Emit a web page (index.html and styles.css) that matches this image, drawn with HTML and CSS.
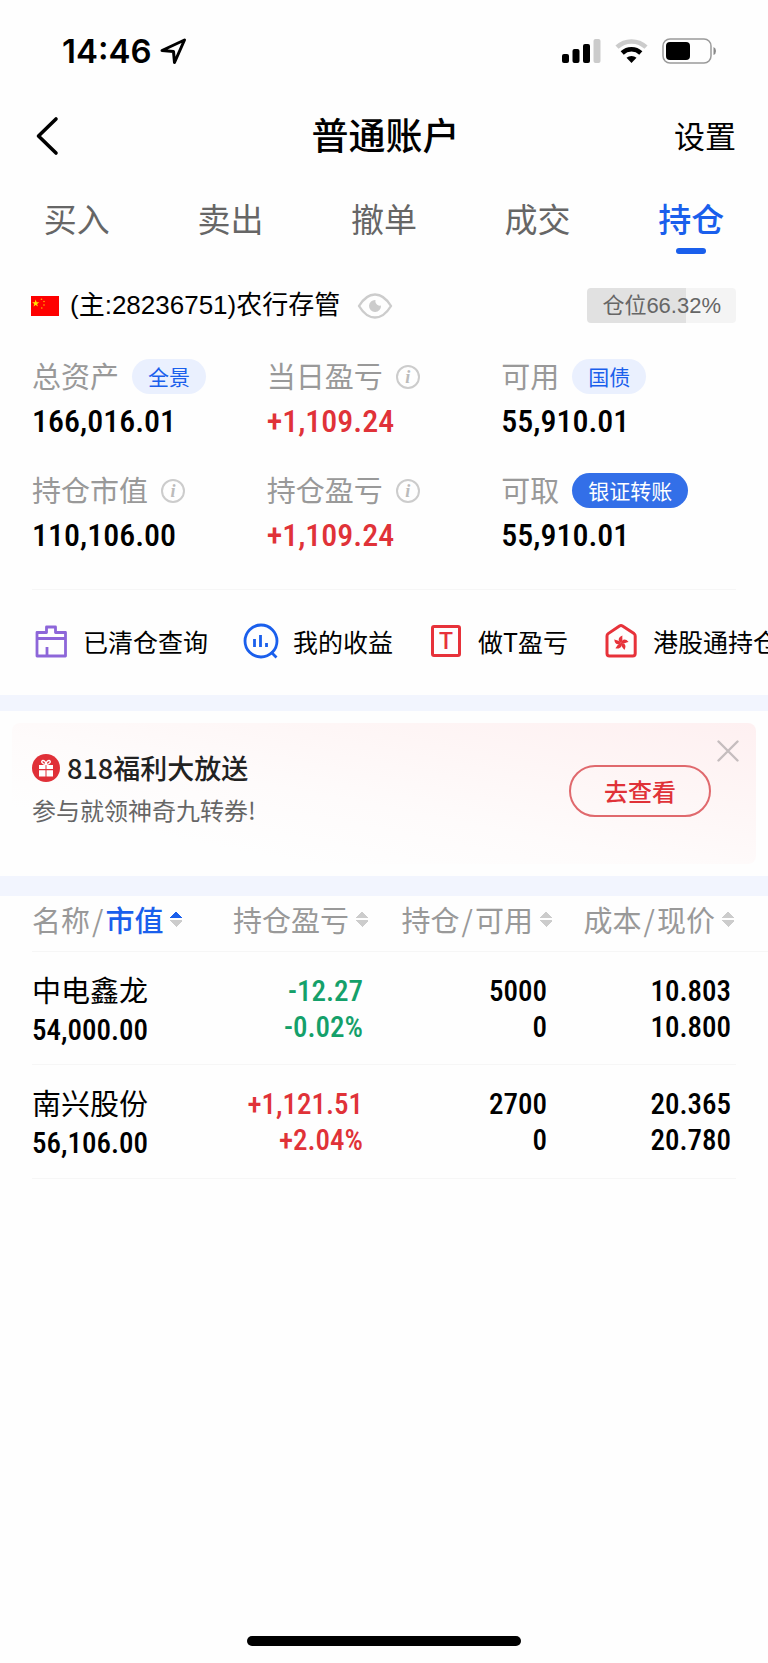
FILE: index.html
```html
<!doctype html>
<html lang="zh-CN">
	<head>
		<meta charset="utf-8" />
		<meta name="viewport" content="width=device-width,initial-scale=1" />
		<title>普通账户</title>
		<link rel="stylesheet" href="styles.css">
	</head>
	<body>
		<div class="status">
			<span class="status-time">14:46</span>
			<svg class="status-location" width="28" height="28" viewBox="0 0 28 28" aria-hidden="true">
				<path d="M3 13.500 L25.500 3 L15.500 25.500 L14.500 14.500 Z" fill="none" stroke="#000" stroke-width="3" stroke-linejoin="round" />
			</svg>
			<svg class="status-signal" width="39" height="26" viewBox="0 0 39 26" aria-hidden="true">
				<rect x="0" y="16" width="7" height="9" rx="2" />
				<rect x="10.500" y="11" width="7" height="14" rx="2" />
				<rect x="21" y="6" width="7" height="19" rx="2" />
				<rect x="31.500" y="1" width="7" height="24" rx="2" fill="#cbcbcb" />
			</svg>
			<svg class="status-wifi" width="33" height="26" viewBox="0 0 33 26" aria-hidden="true">
				<path d="M2 9.200 A21 21 0 0 1 31 9.200" fill="none" stroke="#cbcbcb" stroke-width="4.500" />
				<path d="M7.200 15 A13.500 13.500 0 0 1 25.800 15" fill="none" stroke="#000" stroke-width="4.500" />
				<path d="M11.500 19.800 A7.500 7.500 0 0 1 21.500 19.800 L16.500 25 Z" />
			</svg>
			<svg class="status-battery" width="55" height="26" viewBox="0 0 55 26" aria-hidden="true">
				<rect x="1" y="1" width="48" height="24" rx="7" fill="none" stroke="#9a9a9a" stroke-width="1.500" />
				<rect x="4" y="4" width="24" height="18" rx="4" />
				<path d="M51.500 9 Q54 10 54 13 Q54 16 51.500 17 Z" fill="#8a8a8a" />
			</svg>
		</div>

		<header class="nav">
			<button type="button" class="nav-back" aria-label="返回">
				<svg width="24" height="40" viewBox="0 0 24 40" aria-hidden="true">
					<path d="M21 3 L3.500 20 L21 37" fill="none" stroke="#000" stroke-width="3.600" stroke-linecap="round" stroke-linejoin="round" />
				</svg>
			</button>
			<h1 class="nav-title">普通账户</h1>
			<a class="nav-settings" href="#settings">设置</a>
		</header>

		<nav class="tabs">
			<a class="tab" href="#buy">买入</a>
			<a class="tab" href="#sell">卖出</a>
			<a class="tab" href="#cancel">撤单</a>
			<a class="tab" href="#deals">成交</a>
			<a class="tab tab-active" href="#positions" aria-current="page">持仓</a>
		</nav>

		<section class="account">
			<svg class="flag" width="28" height="20" viewBox="0 0 28 20" aria-hidden="true">
				<rect width="28" height="20" fill="#fe0000" />
				<path d="M4.700 3.600 L5.600 6.300 L8.300 6.300 L6.100 8 L6.900 10.600 L4.700 9 L2.500 10.600 L3.300 8 L1.100 6.300 L3.800 6.300 Z" fill="#ffe600" />
				<g fill="#ffb400">
					<circle cx="10.500" cy="3.200" r=".8" />
					<circle cx="13" cy="5.500" r=".8" />
					<circle cx="13" cy="9" r=".8" />
					<circle cx="10.800" cy="12" r=".8" />
				</g>
			</svg>
			<span class="account-name">(主:28236751)农行存管</span>
			<button type="button" class="eye" aria-label="显示金额">
				<svg width="36" height="26" viewBox="0 0 36 26" aria-hidden="true">
					<path d="M2 13 Q9 1.500 18 1.500 Q27 1.500 34 13 Q27 24.500 18 24.500 Q9 24.500 2 13 Z" fill="none" stroke="#ccc" stroke-width="2.400" stroke-linejoin="round" />
					<path d="M18.500 7 A6 6 0 1 0 24 12.500 A4.500 4.500 0 0 1 18.500 7 Z" fill="#ccc" />
				</svg>
			</button>
			<span class="ratio" style="--ratio: 66.32%">仓位66.32%</span>
		</section>

		<section class="summary">
			<div>
				<div class="summary-label"><span>总资产</span><a class="pill" href="#overview">全景</a></div>
				<div class="summary-value">166,016.01</div>
			</div>
			<div>
				<div class="summary-label"><span>当日盈亏</span><button type="button" class="info" aria-label="当日盈亏说明">i</button></div>
				<div class="summary-value up">+1,109.24</div>
			</div>
			<div>
				<div class="summary-label"><span>可用</span><a class="pill" href="#bonds">国债</a></div>
				<div class="summary-value">55,910.01</div>
			</div>
			<div>
				<div class="summary-label"><span>持仓市值</span><button type="button" class="info" aria-label="持仓市值说明">i</button></div>
				<div class="summary-value">110,106.00</div>
			</div>
			<div>
				<div class="summary-label"><span>持仓盈亏</span><button type="button" class="info" aria-label="持仓盈亏说明">i</button></div>
				<div class="summary-value up">+1,109.24</div>
			</div>
			<div>
				<div class="summary-label"><span>可取</span><a class="pill pill-solid" href="#transfer">银证转账</a></div>
				<div class="summary-value">55,910.01</div>
			</div>
		</section>

		<nav class="quick">
			<a class="quick-item" href="#closed">
				<svg width="36" height="36" viewBox="0 0 36 36" fill="none" stroke="#8d66d9" stroke-width="2.800" stroke-linejoin="round" aria-hidden="true">
					<path d="M4 9.500 H13.500 V4 H22.500 V9.500 H32.500 V33 H4 Z M4 15.500 H32.500 M14 33 V24" />
				</svg>
				已清仓查询
			</a>
			<a class="quick-item" href="#profit">
				<svg width="36" height="36" viewBox="0 0 36 36" fill="none" stroke="#1a5fec" stroke-width="2.800" aria-hidden="true">
					<circle cx="18" cy="18" r="16" />
					<path d="M11.500 16 V24 M17.500 12 V24 M23.500 20 V24 M28 29 L33.500 34.500" />
				</svg>
				我的收益
			</a>
			<a class="quick-item" href="#t-profit">
				<span class="quick-t" aria-hidden="true">T</span>
				做T盈亏
			</a>
			<a class="quick-item" href="#hk">
				<svg width="36" height="36" viewBox="0 0 36 36" aria-hidden="true">
					<path d="M4 13 Q4 11.500 5.200 10.600 L16.500 3 Q18 2 19.500 3 L31 10.600 Q32.200 11.500 32.200 13 V30.500 Q32.200 33 29.700 33 H6.500 Q4 33 4 30.500 Z" fill="none" stroke="#e7323a" stroke-width="3" />
					<g fill="#e7323a">
						<path d="M18 20 C14.500 18 15 14 19.500 12.500 C18.800 15 20.500 17 18 20 Z" />
						<path d="M18 20 C14.500 18 15 14 19.500 12.500 C18.800 15 20.500 17 18 20 Z" transform="rotate(72 18 20)" />
						<path d="M18 20 C14.500 18 15 14 19.500 12.500 C18.800 15 20.500 17 18 20 Z" transform="rotate(144 18 20)" />
						<path d="M18 20 C14.500 18 15 14 19.500 12.500 C18.800 15 20.500 17 18 20 Z" transform="rotate(216 18 20)" />
						<path d="M18 20 C14.500 18 15 14 19.500 12.500 C18.800 15 20.500 17 18 20 Z" transform="rotate(288 18 20)" />
					</g>
				</svg>
				港股通持仓
			</a>
		</nav>

		<section class="promo">
			<div class="banner">
				<div class="banner-text">
					<h2 class="banner-title">
						<svg width="28" height="28" viewBox="0 0 28 28" aria-hidden="true">
							<circle cx="14" cy="14" r="14" fill="#e03038" />
							<path d="M7 11 H13.500 V15 H7 Z M14.500 11 H21 V15 H14.500 Z M7 16.200 H13.500 V22.500 H7 Z M14.500 16.200 H21 V22.500 H14.500 Z" fill="#fff" />
							<path d="M14 10.500 C10 10.500 8.500 7 10.800 6.500 C13 6.200 14 9 14 10.500 C14 9 15 6.200 17.200 6.500 C19.500 7 18 10.500 14 10.500 Z" fill="none" stroke="#fff" stroke-width="1.300" />
						</svg>
						818福利大放送
					</h2>
					<p class="banner-sub">参与就领神奇九转券!</p>
				</div>
				<a class="banner-link" href="#promo">去查看</a>
				<button type="button" class="banner-close" aria-label="关闭">
					<svg width="22" height="22" viewBox="0 0 22 22" aria-hidden="true">
						<path d="M1.500 1.500 L20.500 20.500 M20.500 1.500 L1.500 20.500" stroke="#c5bdbe" stroke-width="2.400" stroke-linecap="round" />
					</svg>
				</button>
			</div>
		</section>

		<main class="positions">
			<table class="table">
				<colgroup>
					<col />
					<col class="col-mid" />
					<col class="col-mid" />
					<col class="col-last" />
				</colgroup>
				<thead>
					<tr>
						<th scope="col" aria-sort="ascending"><button type="button" class="sort sort-asc"><span>名称<i>/</i><b>市值</b></span></button></th>
						<th scope="col"><button type="button" class="sort"><span>持仓盈亏</span></button></th>
						<th scope="col"><button type="button" class="sort"><span>持仓<i>/</i>可用</span></button></th>
						<th scope="col"><button type="button" class="sort"><span>成本<i>/</i>现价</span></button></th>
					</tr>
				</thead>
				<tbody>
					<tr>
						<td><div class="stock">中电鑫龙</div><div>54,000.00</div></td>
						<td class="down"><div>-12.27</div><div>-0.02%</div></td>
						<td><div>5000</div><div>0</div></td>
						<td><div>10.803</div><div>10.800</div></td>
					</tr>
					<tr>
						<td><div class="stock">南兴股份</div><div>56,106.00</div></td>
						<td class="up"><div>+1,121.51</div><div>+2.04%</div></td>
						<td><div>2700</div><div>0</div></td>
						<td><div>20.365</div><div>20.780</div></td>
					</tr>
				</tbody>
			</table>
		</main>

		<footer class="home"><span class="home-bar"></span></footer>
	</body>
</html>
```

FILE: styles.css
```css
:root {
	--blue: #1a5fec;
	--red: #e03238;
	--green: #14a06a;
	--band: #f2f5fe;
	--line: #f6f6f6;
	--cjk: "Noto Sans CJK SC", sans-serif;
	--text: "Liberation Sans", "Noto Sans CJK SC", sans-serif;
	--number: "Roboto Condensed", "Liberation Sans Narrow", Roboto, sans-serif;
}

* {
	box-sizing: border-box;
}

body {
	display: flex;
	flex-direction: column;
	min-height: 100vh;
	margin: 0;
	overflow-x: hidden;
	background: #fefefe;
	color: #000;
	font-family: var(--cjk);
}

button {
	border: 0;
	background: none;
	padding: 0;
	color: inherit;
	font: inherit;
}

a {
	color: inherit;
	text-decoration: none;
}

svg {
	display: block;
	flex: none;
}

.up {
	color: var(--red);
}

.down {
	color: var(--green);
}

/* status bar */
.status {
	display: flex;
	align-items: center;
	height: 102px;
	padding: 0 51px 0 62px;
}

.status-time {
	font: 600 33px/40px Inter, sans-serif;
}

.status-location {
	margin-left: 7px;
}

.status-signal {
	margin-left: auto;
}

.status-wifi {
	margin-left: 14px;
}

.status-battery {
	margin-left: 14px;
}

/* title bar */
.nav {
	display: grid;
	grid-template-columns: 1fr auto 1fr;
	align-items: center;
	height: 68px;
	padding: 0 32px 0 35px;
}

.nav-title {
	margin: 0;
	padding-bottom: 4px;
	font-size: 37px;
	font-weight: 500;
	line-height: 48px;
}

.nav-settings {
	justify-self: end;
	padding-bottom: 2px;
	font-size: 31px;
	line-height: 48px;
}

.tabs {
	display: grid;
	grid-template-columns: repeat(5, 1fr);
	padding-top: 24px;
}

.tab {
	display: flex;
	flex-direction: column;
	align-items: center;
	gap: 6px;
	color: #666;
	font-size: 33px;
	line-height: 48px;
}

.tab-active {
	color: var(--blue);
	font-weight: 500;

	&::after {
		width: 30px;
		height: 6px;
		border-radius: 3px;
		background: var(--blue);
		content: "";
	}
}

/* account line */
.account {
	display: flex;
	align-items: center;
	padding: 34px 32px 0 31px;
}

.account-name {
	margin: 0 17px 0 11px;
	font: 26px/35px var(--text);
}

.ratio {
	margin-left: auto;
	border-radius: 4px;
	background: linear-gradient(90deg, #e1e1e1 var(--ratio), #f4f4f4 var(--ratio));
	padding: 0 15px;
	color: #666;
	font: 22px/35px var(--text);
}

/* assets */
.summary {
	display: grid;
	grid-template-columns: repeat(3, 1fr);
	row-gap: 35px;
	margin: 0 32px;
	border-bottom: 1px solid var(--line);
	padding: 36px 0 37px;
}

.summary-label {
	display: flex;
	align-items: center;
	height: 35px;
	color: #999;
	font-size: 29px;

	& span {
		padding-bottom: 3px;
	}
}

.summary-value {
	margin-top: 10px;
	font: 500 32px/34px var(--number);
}

.pill {
	margin-left: 13px;
	border-radius: 18px;
	background: #eaf0fe;
	padding: 0 16px;
	color: var(--blue);
	font-size: 21px;
	line-height: 35px;
}

.pill-solid {
	background: #336fe8;
	color: #fff;
}

.info {
	width: 24px;
	height: 24px;
	margin-left: 13px;
	border: 2px solid #ccc;
	border-radius: 50%;
	color: #bbb;
	font: italic bold 18px/18px "Liberation Serif", serif;
}

/* shortcuts */
.quick {
	display: flex;
	gap: 35px;
	overflow-x: auto;
	padding: 33px 0 36px 33px;
	scrollbar-width: none;
}

.quick-item {
	display: flex;
	flex: none;
	align-items: center;
	gap: 14px;
	font-size: 25px;
	line-height: 36px;
}

.quick-t {
	width: 30px;
	height: 32px;
	margin: 0 3px;
	border: 3px solid #e7323a;
	border-radius: 3px;
	color: #e7323a;
	text-align: center;
	font: 500 23px/27px Roboto, sans-serif;
}

/* promotion */
.promo {
	border-top: 16px solid var(--band);
	border-bottom: 20px solid var(--band);
	padding: 12px;
}

.banner {
	display: flex;
	position: relative;
	align-items: center;
	justify-content: space-between;
	height: 141px;
	border-radius: 8px;
	background: linear-gradient(191deg, #fef0f1 0%, #fef6f6 30%, #fefbfb 55%, #fefefe 80%);
	padding: 0 45px 5px 20px;
}

.banner-text {
	padding-bottom: 6px;
}

.banner-title {
	display: flex;
	align-items: center;
	gap: 7px;
	margin: 0;
	color: #222;
	font-size: 27px;
	font-weight: 500;
	line-height: 44px;
}

.banner-sub {
	margin: 0;
	color: #666;
	font-size: 24px;
	line-height: 40px;
}

.banner-link {
	border: 2px solid #e0696d;
	border-radius: 26px;
	padding: 0 33px;
	color: var(--red);
	font-size: 24px;
	font-weight: 500;
	line-height: 48px;
}

.banner-close {
	position: absolute;
	top: 17px;
	right: 17px;
}

/* positions */
.positions {
	padding-left: 32px;
}

.table {
	width: 100%;
	border-collapse: collapse;
	table-layout: fixed;
}

.col-mid {
	width: 25%;
}

.col-last {
	width: 216px;
}

.table th {
	height: 55px;
	border-bottom: 1px solid var(--line);
	padding: 0;
	vertical-align: top;
	text-align: right;
	white-space: nowrap;

	&:first-child {
		text-align: left;
	}

	&:last-child {
		padding-right: 34px;
	}
}

.sort {
	display: inline-flex;
	align-items: center;
	gap: 7px;
	color: #999;
	font-size: 29px;
	font-weight: 400;
	line-height: 46px;

	& i {
		padding: 0 2px;
		font-style: normal;
	}

	& b {
		color: var(--blue);
		font-weight: 500;
	}

	/* up and down arrows */
	&::after {
		width: 12px;
		height: 16px;
		background:
			conic-gradient(from 135deg at 50% 0, #ccc 90deg, transparent 0) top / 100% 7px no-repeat,
			conic-gradient(from -45deg at 50% 100%, #ccc 90deg, transparent 0) bottom / 100% 7px no-repeat;
		content: "";
	}
}

.sort-asc::after {
	background:
		conic-gradient(from 135deg at 50% 0, var(--blue) 90deg, transparent 0) top / 100% 7px no-repeat,
		conic-gradient(from -45deg at 50% 100%, #ccc 90deg, transparent 0) bottom / 100% 7px no-repeat;
}

.table tbody tr {
	height: 114px;
	background: linear-gradient(var(--line), var(--line)) left bottom / calc(100% - 32px) 1px no-repeat;
}

.table td {
	padding: 21px 5px 0 0;
	vertical-align: top;
	text-align: right;
	font: 500 29px/36px var(--number);

	&:first-child {
		padding: 17px 0 0;
		text-align: left;
	}

	&:last-child {
		padding-right: 37px;
	}
}

.table .stock {
	margin-bottom: 3px;
	font: 29px/40px var(--cjk);
}

/* home indicator */
.home {
	display: flex;
	justify-content: center;
	margin-top: auto;
	padding-bottom: 17px;
}

.home-bar {
	width: 274px;
	height: 10px;
	border-radius: 5px;
	background: #000;
}
```
